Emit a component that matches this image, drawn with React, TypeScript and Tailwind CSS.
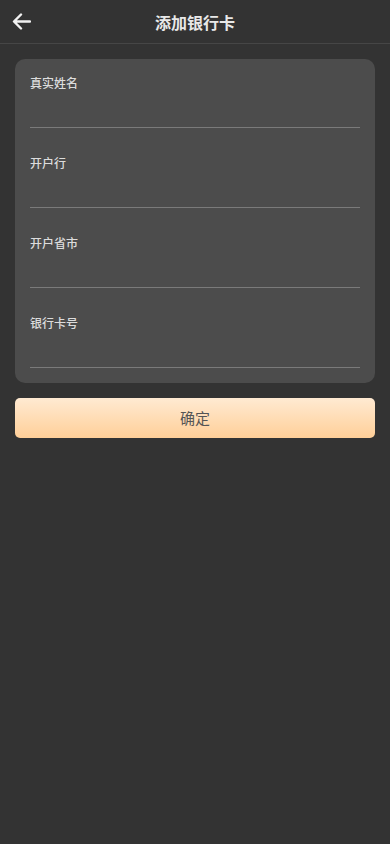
import { useState } from 'react';

const FIELDS = ['真实姓名', '开户行', '开户省市', '银行卡号'];

const FONT = { fontFamily: '"Noto Sans CJK SC", "Noto Sans", sans-serif' };

export default function App() {
  const [values, setValues] = useState<Record<string, string>>({});

  return (
    <div className="min-h-[844px] w-full bg-[#333333]" style={FONT}>
      {/* Header */}
      <div className="relative flex h-[44px] items-center justify-center border-b border-[#464646]">
        <button className="absolute left-[12px] top-[13px] text-[#f2f2f2]" aria-label="back">
          <svg width="19" height="17" viewBox="0 0 19 17" fill="none">
            <path
              d="M18 8.5H2.5M9 1.5L2 8.5L9 15.5"
              stroke="currentColor"
              strokeWidth="2.4"
              strokeLinecap="round"
              strokeLinejoin="round"
            />
          </svg>
        </button>
        <h1 className="text-[16px] font-bold text-[#e8e8e8]">添加银行卡</h1>
      </div>

      {/* Form card */}
      <div className="mx-[15px] mt-[15px] flex flex-col gap-[26px] rounded-[10px] bg-[#4c4c4c] px-[15px] pt-[15px] pb-[15px]">
        {FIELDS.map((label) => (
          <div key={label} className="flex flex-col">
            <label className="text-[12px] font-medium leading-[18px] text-[#dcdcdc]">{label}</label>
            <input
              className="h-[36px] w-full border-b border-[#7a7a7a] bg-transparent text-[14px] text-white outline-none"
              value={values[label] ?? ''}
              onChange={(e) => setValues({ ...values, [label]: e.target.value })}
            />
          </div>
        ))}
      </div>

      {/* Submit */}
      <div className="px-[15px] pt-[15px]">
        <button className="flex h-[40px] w-full items-center justify-center rounded-[5px] bg-gradient-to-b from-[#ffead2] to-[#ffcf98] text-[15px] text-[#555555]">
          确定
        </button>
      </div>
    </div>
  );
}
